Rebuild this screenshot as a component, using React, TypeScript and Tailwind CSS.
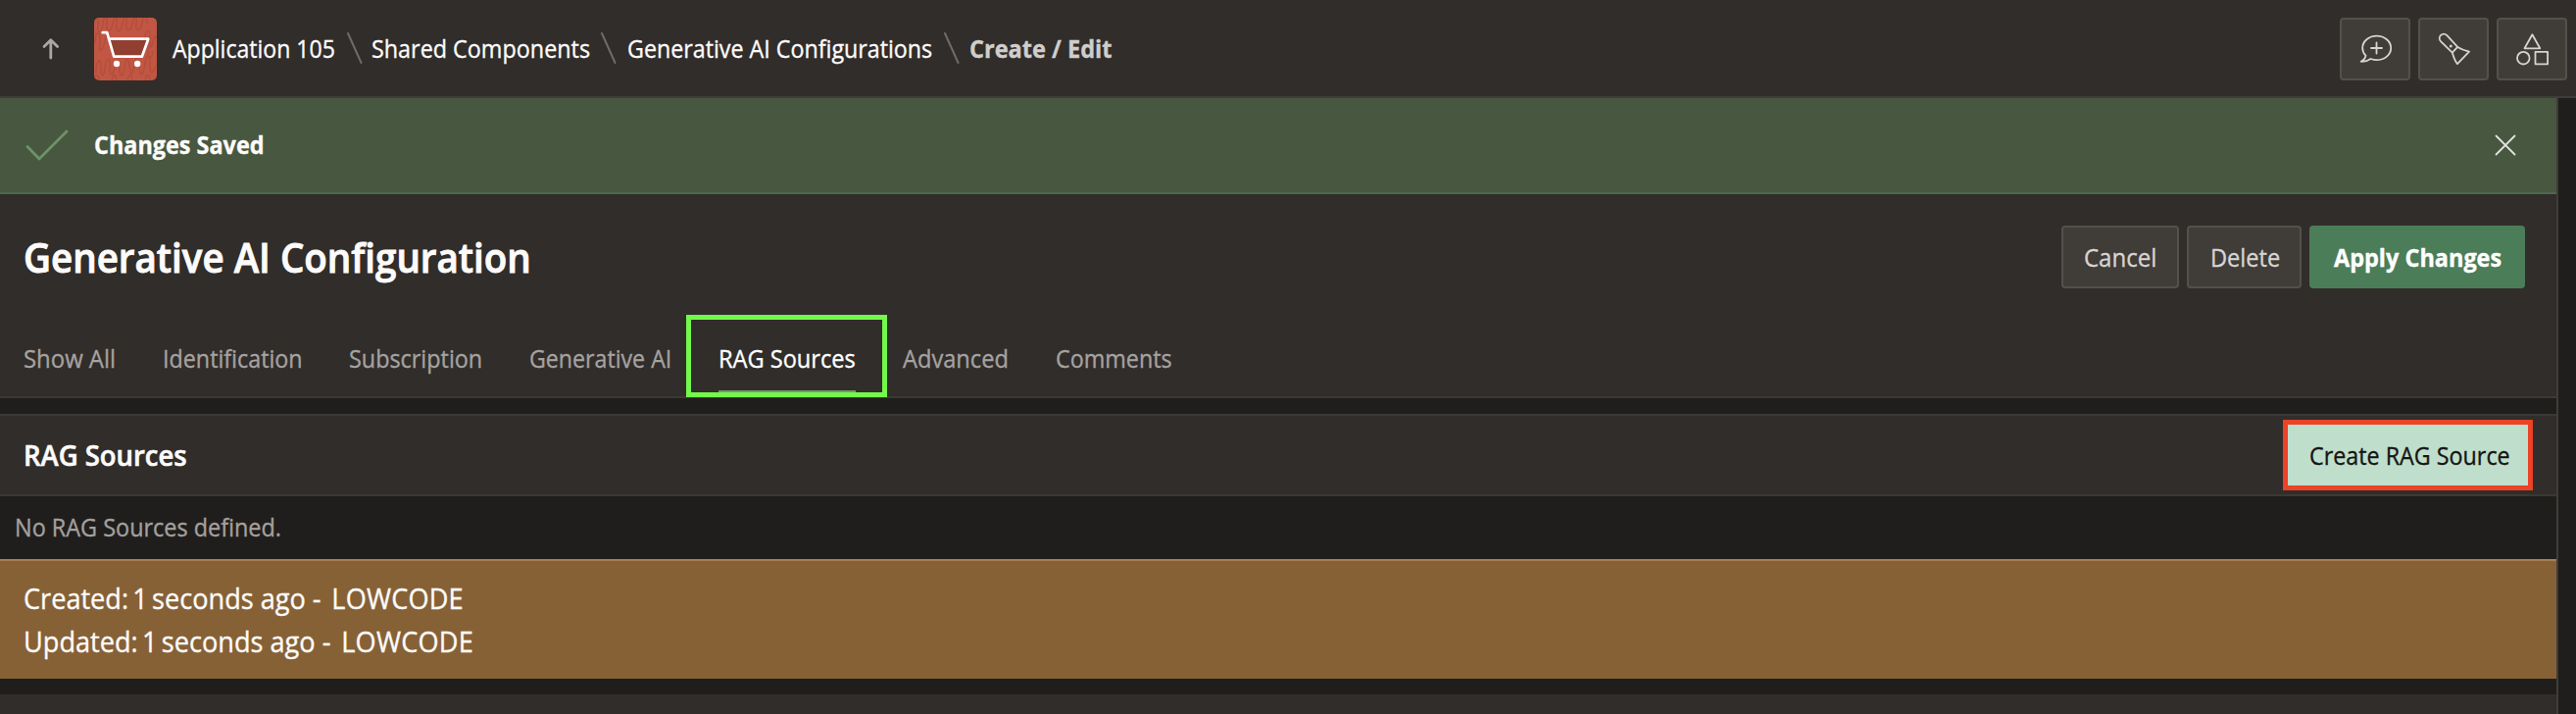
import React from "react";

function Label({ box, text, children }: { box: string; text: string; children: React.ReactNode }) {
  return (
    <span className={`block shrink-0 whitespace-nowrap ${box}`}>
      <span className={`inline-block origin-left ${text}`}>{children}</span>
    </span>
  );
}

function Slash() {
  return (
    <svg width="18" height="34" viewBox="0 0 18 34" fill="none" stroke="#6f6b67" strokeWidth="2" strokeLinecap="round">
      <path d="M2 2 L15.5 32" />
    </svg>
  );
}

function CartTile() {
  return (
    <svg width="64" height="64" viewBox="0 0 64 64" fill="none">
      <defs>
        <clipPath id="tile">
          <rect width="64" height="64" rx="5" />
        </clipPath>
      </defs>
      <g clipPath="url(#tile)">
        <rect width="64" height="64" fill="#c05643" />
        <g stroke="#b44d3b" strokeWidth="1.3">
          <path d="M-1 8c3-12 6-10 5 0s4 8 5-2 5-8 4 1 4 8 6-1 5-8 4 1 4 9 6-1 5-9 4 0 4 9 6 0 5-9 4 0 4 9 6-1 5-6 5 1" />
          <path d="M1 26c0-12 5-14 5-4s-2 14 2 10 3-18 6-12 0 14 4 10" />
          <path d="M52 24c0-14 5-14 5-3s1 12 3 4 3-8 5-2M50 34c3-10 6-8 5 0s4 10 5 0" />
          <path d="M2 56c0-14 5-16 5-5s3 10 4 0 5-12 5-2 2 14 5 2 5-10 5 0 3 12 5 0 4-10 5-2 2 14 5 0 4-12 5 0 4 12 6-2 5-8 5 2 3 8 6 0" />
          <path d="M-1 68c2-12 6-12 6-3M18 68c0-12 5-12 5-2M34 68c0-12 5-12 5-2M52 68c0-12 5-12 5-2" />
        </g>
      </g>
      <path d="M16 22H55L48.5 39.7H20.8Z" fill="#913f31" />
      <path
        d="M8.7 15.2H13.2L20.2 39.7H48.8L55.3 21.7H15.4"
        stroke="#fff"
        strokeWidth="2.7"
        strokeLinecap="round"
        strokeLinejoin="round"
      />
      <circle cx="23" cy="47" r="3.2" fill="#fff" />
      <circle cx="44.2" cy="47" r="3.2" fill="#fff" />
    </svg>
  );
}

function IconButton({ children }: { children: React.ReactNode }) {
  return (
    <button className="h-16 w-[72px] rounded-[4px] border-2 border-[#54504b] bg-[#403c38]">
      <svg
        width="68"
        height="60"
        viewBox="2 2 68 60"
        fill="none"
        stroke="#d6d4d2"
        strokeWidth="1.8"
        strokeLinejoin="round"
        strokeLinecap="round"
      >
        {children}
      </svg>
    </button>
  );
}

function Stamp({ action, box, text }: { action: string; box: string; text: string }) {
  return (
    <Label box={box} text={text}>
      <span className="[word-spacing:-3px]">{action}: 1 </span>
      seconds ago - <span className="ml-1 tracking-[0.2px]">LOWCODE</span>
    </Label>
  );
}

const tabs: { label: string; box: string; text: string; active?: boolean }[] = [
  { label: "Show All", box: "w-[142px]", text: "scale-x-[0.956]" },
  { label: "Identification", box: "w-[190px]", text: "scale-x-[0.932]" },
  { label: "Subscription", box: "w-[184px]", text: "scale-x-[0.935]" },
  { label: "Generative AI", box: "w-[193px]", text: "scale-x-[0.927]" },
  { label: "RAG Sources", box: "w-[188px]", text: "scale-x-[0.943]", active: true },
  { label: "Advanced", box: "w-[156px]", text: "scale-x-[0.945]" },
  { label: "Comments", box: "w-[120px]", text: "scale-x-[0.932]" },
];

export default function App() {
  return (
    <div className="flex h-[728px] w-[2628px] flex-col overflow-hidden bg-[#201e1c] font-['Open_Sans','Noto_Sans',sans-serif] text-[25px] leading-[34px] text-[#fcfbfa] [-webkit-text-stroke:0.35px]">
      <header className="flex h-[100px] shrink-0 items-center border-b-2 border-[#403c38] bg-[#312d2a] pr-[9px] pl-[40px]">
        <svg className="mt-0.5 mr-[32px]" width="24" height="24" viewBox="0 0 24 24" fill="none" stroke="#aaa7a4" strokeWidth="2.8" strokeLinecap="round" strokeLinejoin="round">
          <path d="M11.8 21V2.8M5 9.6L11.8 2.8L18.6 9.6" />
        </svg>
        <div className="mt-0.5">
          <CartTile />
        </div>
        <nav className="flex items-center pl-4 font-medium">
          <Label box="w-[177px]" text="scale-x-[0.922]">Application 105</Label>
          <Slash />
          <Label box="w-[241px] pl-[8px]" text="scale-x-[0.934]">Shared Components</Label>
          <Slash />
          <Label box="w-[332px] pl-[10px]" text="scale-x-[0.93]">Generative AI Configurations</Label>
          <Slash />
          <Label box="w-[160px] pl-[9px] font-bold text-[#d0cecc]" text="scale-x-[0.942]">Create / Edit</Label>
        </nav>
        <div className="mt-0.5 ml-auto flex gap-2">
          <IconButton>
            <path d="M26.5 38.6C24.3 36.5 23.2 34 23.2 31C23.2 24.2 29.6 18.7 37.7 18.7S52.2 24.2 52.2 31S45.8 43.2 37.7 43.2C35.5 43.2 33.4 42.7 31.5 42C29 43.8 25.5 45 21.7 44.7C24 43.4 26.2 41 26.5 38.6Z" />
            <path d="M37.5 25.5V36.5M32 31H43" />
          </IconButton>
          <IconButton>
            <path d="M34.5 35.3L23.2 24.4C18.8 19.8 25.2 13.6 29.4 18.2L40.2 29.9C43.6 32 47.5 33.5 52 34.7L40 47.2C37.2 44 36 40 34.8 35.6L40.2 29.9" />
            <circle cx="33.3" cy="29" r="0.6" />
          </IconButton>
          <IconButton>
            <path d="M36.4 17.3L44.3 31.3H28.5Z" />
            <circle cx="27.3" cy="41.2" r="6.3" />
            <path d="M39.5 34.9H52.1V47.3H39.5Z" />
          </IconButton>
        </div>
      </header>

      <main className="w-[2610px] grow border-r-2 border-[#403c38]">
        <div className="flex h-[98px] items-center border-b-2 border-[#4f684b] bg-[#48573f] pr-[40px] pb-0.5 pl-[24px]">
          <svg width="72" height="40" viewBox="0 0 72 40" fill="none" stroke="#6f9168" strokeWidth="2.8" strokeLinecap="round" strokeLinejoin="round">
            <path d="M4 22.5L16 35L44 7" />
          </svg>
          <Label box="w-[180px] font-bold" text="scale-x-[0.936]">Changes Saved</Label>
          <svg className="mt-0.5 ml-auto" width="24" height="24" viewBox="0 0 24 24" stroke="#e2e2df" strokeWidth="1.8" strokeLinecap="round">
            <path d="M2.5 2.5L21.5 21.5M21.5 2.5L2.5 21.5" />
          </svg>
        </div>

        <section className="h-[208px] border-b-2 border-[#3c3935] bg-[#312d2a]">
          <div className="flex h-[128px] items-center pr-8 pl-[24px]">
            <h1 className="text-[41px] leading-[56px] font-semibold [-webkit-text-stroke:0.9px]">
              <Label box="w-[520px]" text="scale-x-[0.94]">Generative AI Configuration</Label>
            </h1>
            <div className="ml-auto flex gap-2 text-[#d6d4d2]">
              <button className="h-16 w-[120px] rounded-[4px] border-2 border-[#54504b] bg-[#403c38] pl-[21px] text-left">
                <Label box="w-[72px]" text="scale-x-[0.96]">Cancel</Label>
              </button>
              <button className="h-16 w-[117px] rounded-[4px] border-2 border-[#54504b] bg-[#403c38] pl-[21.5px] text-left">
                <Label box="w-[70px]" text="scale-x-[0.943]">Delete</Label>
              </button>
              <button className="h-16 w-[220px] rounded-[4px] bg-[#4b7d58] pl-[25px] text-left font-bold text-white">
                <Label box="w-[174px]" text="scale-x-[0.938]">Apply Changes</Label>
              </button>
            </div>
          </div>
          <div className="relative flex h-[78px] pt-[22px] pl-[23.5px] text-[#a5a2a0]">
            {tabs.map((t) => (
              <Label key={t.label} box={t.active ? `${t.box} font-medium text-white` : t.box} text={t.text}>
                {t.label}
              </Label>
            ))}
            <div className="absolute top-[72px] left-[733px] h-0.5 w-[140px] bg-[#75966f]" />
            <div className="absolute top-[-5px] left-[700px] h-[84px] w-[205px] border-5 border-[#74f84b]" />
          </div>
        </section>

        <section className="mt-4 flex h-[84px] items-center border-y-2 border-[#3c3935] bg-[#312d2a] pr-[24px] pl-[24px]">
          <h2 className="text-[29px] leading-10 font-semibold [-webkit-text-stroke:0.6px]">
            <Label box="w-[170px]" text="scale-x-[0.946]">RAG Sources</Label>
          </h2>
          <button className="ml-auto h-[72px] w-[255px] border-5 border-[#ec4226] bg-[#bfdfcc] pl-[22px] text-left text-[#161513]">
            <Label box="w-[206px]" text="scale-x-[0.932]">Create RAG Source</Label>
          </button>
        </section>

        <div className="flex h-16 items-center pb-0.5 pl-[15px] text-[#a3a19f]">
          <Label box="w-[280px]" text="scale-x-[0.937]">No RAG Sources defined.</Label>
        </div>

        <section className="h-[122px] border-t-2 border-[#a87e50] bg-[#876136] pt-4 pl-[23.5px] text-[29px] leading-[44px]">
          <Stamp action="Created" box="w-[450px]" text="scale-x-[0.935]" />
          <Stamp action="Updated" box="w-[460px]" text="scale-x-[0.936]" />
        </section>

        <div className="mt-4 h-5 bg-[#312d2a]" />
      </main>
    </div>
  );
}
